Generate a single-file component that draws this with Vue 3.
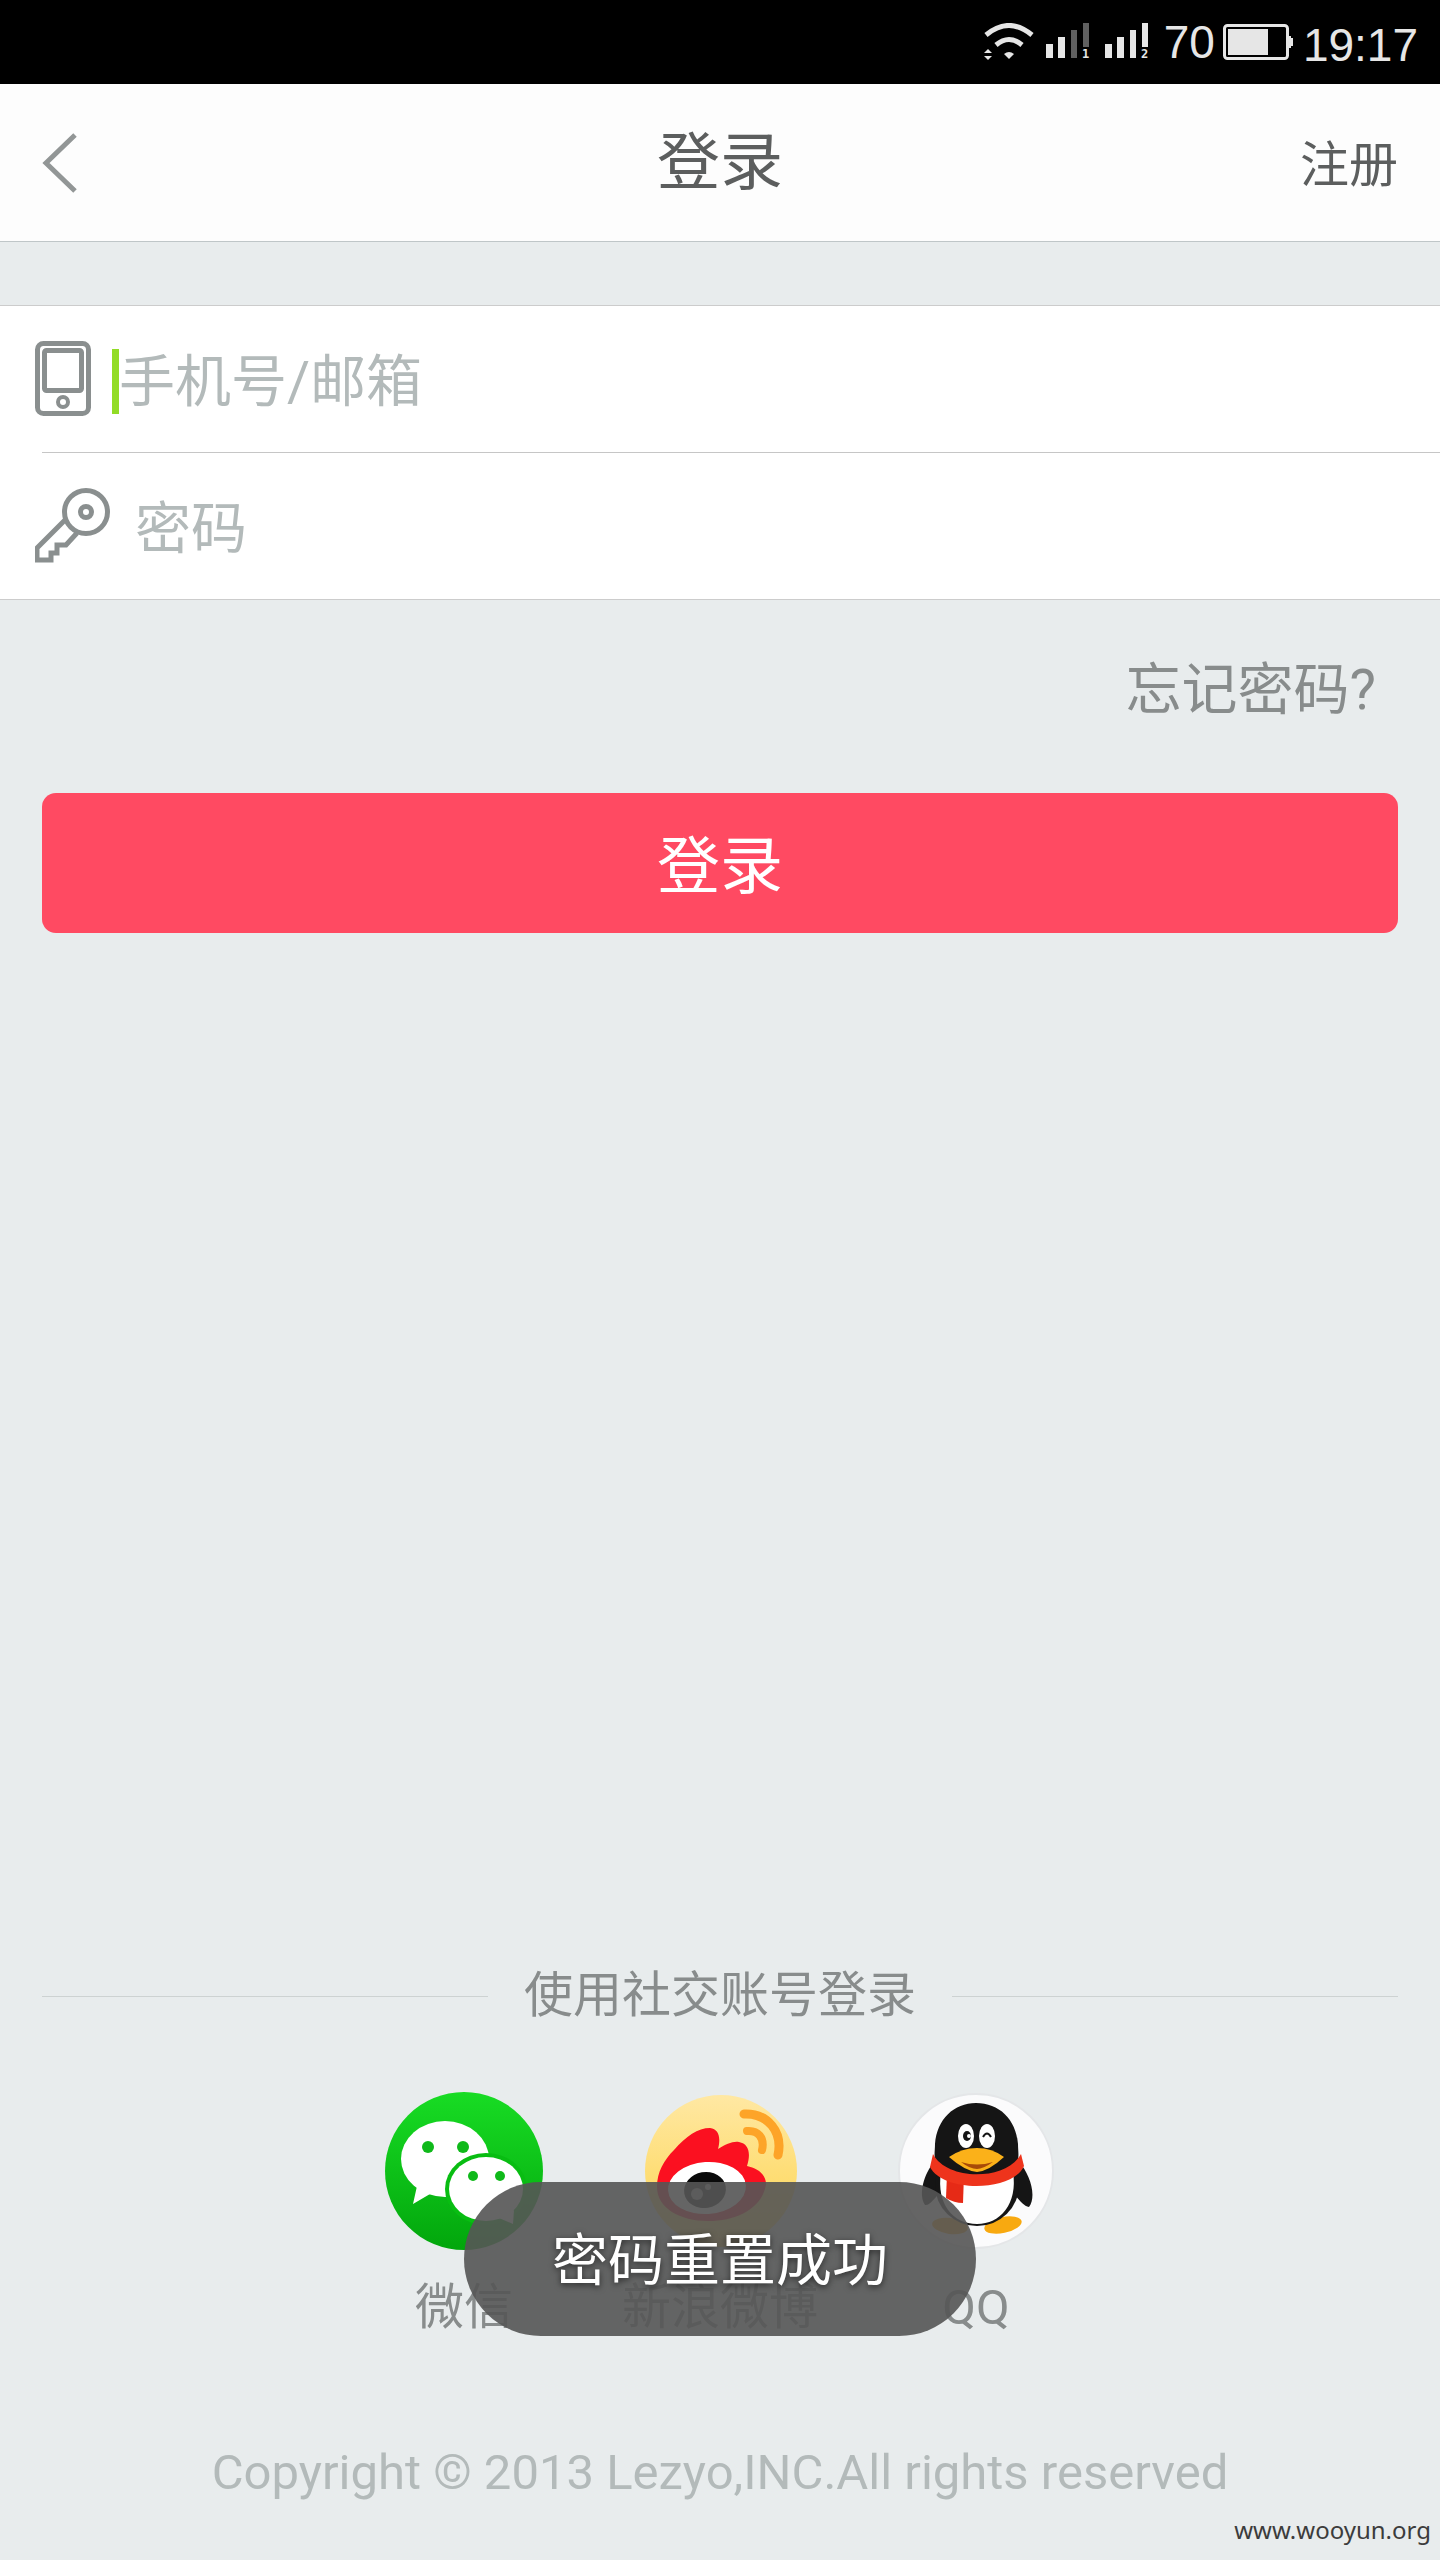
<template>
  <div class="page">
    <!-- 状态栏 -->
    <div class="status-bar">
      <svg class="wifi" width="50" height="38" viewBox="0 0 50 38">
        <path d="M2 12 Q25 -7 48 12" fill="none" stroke="#e6e6e6" stroke-width="5" />
        <path d="M12 22 Q25 11 38 22" fill="none" stroke="#e6e6e6" stroke-width="5" />
        <path d="M20 31 Q25 27 30 31 L25 36 Z" fill="#e6e6e6" />
        <path d="M0 30 L4 26 L8 30 Z M0 33 L8 33 L4 37 Z" fill="#e6e6e6" />
      </svg>
      <svg v-for="sim in sims" :key="sim.id" class="signal" width="45" height="38" viewBox="0 0 45 38">
        <rect x="0" y="21" width="7" height="14" fill="#e6e6e6" />
        <rect x="12" y="14" width="7" height="21" fill="#e6e6e6" />
        <rect x="25" y="7" width="6" height="28" :fill="sim.weak ? '#606060' : '#e6e6e6'" />
        <rect x="37" y="0" width="6" height="24" :fill="sim.weak ? '#606060' : '#e6e6e6'" />
        <text x="36" y="35" class="sim-no">{{ sim.id }}</text>
      </svg>
      <span class="battery-level">70</span>
      <svg class="battery" width="70" height="36" viewBox="0 0 70 36">
        <rect x="1.5" y="1.5" width="63" height="33" rx="3" fill="none" stroke="#e6e6e6" stroke-width="3" />
        <rect x="5" y="5" width="40" height="26" fill="#e6e6e6" />
        <path d="M65 12 h3 v2 h2 v8 h-2 v2 h-3 Z" fill="#e6e6e6" />
      </svg>
      <span class="time">19:17</span>
    </div>

    <!-- 标题栏 -->
    <header class="header">
      <button type="button" class="back" aria-label="返回">
        <svg width="36" height="62" viewBox="0 0 36 62">
          <path d="M33 3 L4 31 L33 59" fill="none" stroke="#929696" stroke-width="5" />
        </svg>
      </button>
      <h1>登录</h1>
      <a href="#register" class="register">注册</a>
    </header>

    <!-- 登录表单 -->
    <form @submit.prevent="login">
      <div class="fields">
        <div class="field">
          <label for="account" aria-label="手机号/邮箱">
            <svg width="56" height="75" viewBox="0 0 56 75" fill="none" stroke="#8a8f8f">
              <rect x="2.5" y="2.5" width="51" height="70" rx="6" stroke-width="5" />
              <rect x="9.5" y="9.5" width="37" height="40" rx="2" stroke-width="5" />
              <circle cx="28" cy="61" r="5" stroke-width="4" />
            </svg>
          </label>
          <span v-if="!form.account" class="caret"></span>
          <input id="account" v-model="form.account" type="text" placeholder="手机号/邮箱" />
        </div>
        <div class="divider"></div>
        <div class="field">
          <label for="password" aria-label="密码">
            <svg width="79" height="75" viewBox="0 0 79 75" fill="none" stroke="#8a8f8f">
              <circle cx="51" cy="24" r="21.5" stroke-width="5" />
              <circle cx="51" cy="24" r="5.5" stroke-width="5" />
              <path d="M30 32 L2 60 V72 H16 V65 H22 V57 H31 L42 45" stroke-width="5" />
            </svg>
          </label>
          <input id="password" v-model="form.password" type="password" placeholder="密码" />
        </div>
      </div>
      <div class="forgot">
        <a href="#forgot">忘记密码?</a>
      </div>
      <button type="submit" class="submit">登录</button>
    </form>

    <!-- 社交账号 -->
    <section class="social">
      <h2>使用社交账号登录</h2>
      <div class="social-list">
        <a href="#wechat" class="social-item">
          <svg width="160" height="160" viewBox="0 0 160 160">
            <defs>
              <linearGradient id="wechat-bg" x1="0" y1="0" x2="0" y2="1">
                <stop offset="0" stop-color="#18dc24" />
                <stop offset="1" stop-color="#02a60c" />
              </linearGradient>
            </defs>
            <circle cx="80" cy="79" r="79" fill="url(#wechat-bg)" />
            <ellipse cx="61" cy="67" rx="44" ry="38" fill="#fff" />
            <path d="M33 94 L29 112 L46 102 L56 98 Z" fill="#fff" />
            <circle cx="44" cy="55" r="6" fill="#0fb91a" />
            <circle cx="79" cy="55" r="6" fill="#0fb91a" />
            <ellipse cx="102" cy="97" rx="41" ry="36" fill="#08bd12" />
            <ellipse cx="102" cy="97" rx="37" ry="32" fill="#fff" />
            <path d="M115 126 L129 132 L130 118 Z" fill="#fff" />
            <circle cx="89" cy="84" r="5" fill="#0fb91a" />
            <circle cx="116" cy="84" r="5" fill="#0fb91a" />
          </svg>
          <span>微信</span>
        </a>
        <a href="#weibo" class="social-item">
          <svg width="160" height="160" viewBox="0 0 160 160">
            <defs>
              <linearGradient id="weibo-bg" x1="0" y1="0" x2="0" y2="1">
                <stop offset="0" stop-color="#ffe8a3" />
                <stop offset="1" stop-color="#fdd44c" />
              </linearGradient>
            </defs>
            <circle cx="81" cy="79" r="76" fill="url(#weibo-bg)" />
            <path
              d="M17 95 C17 80 24 68 34 58 C46 44 58 36 70 36 C79 37 81 46 78 57 C86 52 93 49 99 50 C109 52 111 61 107 74 C117 76 126 82 126 92 C123 115 98 129 68 129 C40 129 17 116 17 95 Z"
              fill="#fb1020"
            />
            <ellipse cx="67" cy="96" rx="39" ry="26" fill="#fff" transform="rotate(-4 67 96)" />
            <ellipse cx="65" cy="98" rx="21" ry="18" fill="#0a0a0a" transform="rotate(-10 65 98)" />
            <circle cx="57" cy="102" r="6" fill="#999" />
            <circle cx="68" cy="95" r="3" fill="#999" />
            <g fill="none" stroke="#fda428" stroke-linecap="round">
              <path d="M104 22 C128 21 143 40 138 63" stroke-width="9" />
              <path d="M107 39 C118 38 125 46 122 58" stroke-width="8" />
            </g>
          </svg>
          <span>新浪微博</span>
        </a>
        <a href="#qq" class="social-item">
          <svg width="160" height="160" viewBox="0 0 160 160">
            <circle cx="80" cy="79" r="77" fill="#fbfbfc" stroke="#e4e6e8" stroke-width="2" />
            <!-- 脚 -->
            <ellipse cx="54" cy="134" rx="18" ry="8" fill="#f8a910" transform="rotate(8 54 134)" />
            <ellipse cx="107" cy="133" rx="19" ry="8" fill="#f8a910" transform="rotate(-12 107 133)" />
            <!-- 翅膀和身体 -->
            <path d="M38 70 C28 82 22 102 29 113 C34 114 38 106 44 101 L50 76 Z" fill="#151515" />
            <path d="M123 70 C134 82 141 104 133 115 C127 114 123 107 117 101 L112 76 Z" fill="#151515" />
            <ellipse cx="81" cy="93" rx="42" ry="41" fill="#151515" />
            <path d="M39 68 C38 62 39 58 39 52 C41 27 58 11 80 11 C103 11 120 27 122 52 C122 58 123 62 122 68 Z" fill="#151515" />
            <path d="M45 80 H117 C122 112 104 132 81 132 C57 132 40 112 45 80 Z" fill="#fff" />
            <path d="M39 66 H122 L119 82 Q81 94 42 82 Z" fill="#151515" />
            <!-- 围巾 -->
            <path d="M51 82 H68 L67 111 Q58 111 50 106 Z" fill="#e62a16" />
            <path d="M37 62 C51 89 110 89 125 62 L128 74 C117 100 47 101 34 75 Z" fill="#ee341c" />
            <!-- 脸 -->
            <ellipse cx="70" cy="44" rx="8" ry="12" fill="#fff" />
            <ellipse cx="91" cy="44" rx="8" ry="12" fill="#fff" />
            <ellipse cx="71" cy="44" rx="4" ry="5" fill="#151515" />
            <circle cx="73" cy="44" r="2" fill="#fff" />
            <path d="M87 45 Q91 38 95 45" fill="none" stroke="#151515" stroke-width="2" />
            <path d="M53 65 Q66 56 81 56 Q96 56 108 65 Q93 79 81 80 Q69 79 53 65 Z" fill="#fbb119" />
            <path d="M65 70 Q81 75 97 70 Q87 77 81 77 Q74 77 65 70 Z" fill="#a84a08" />
          </svg>
          <span>QQ</span>
        </a>
      </div>
    </section>

    <!-- 页脚 -->
    <footer>
      <p class="copyright">Copyright © 2013 Lezyo,INC.All rights reserved</p>
      <p class="site">www.wooyun.org</p>
    </footer>

    <div class="toast" role="status">密码重置成功</div>
  </div>
</template>

<script setup>
import { ref } from 'vue'

const sims = [
  { id: 1, weak: true },
  { id: 2, weak: false },
]

const form = ref({
  account: '',
  password: '',
})

function login() {
  console.log(form.value.account)
}
</script>

<style>
body {
  margin: 0;
  background-color: #e8eced;
}
</style>

<style scoped>
.page {
  position: relative;
  display: flex;
  flex-direction: column;
  min-height: 100vh;
  background-color: #e8eced;
  font-family: Roboto, 'Noto Sans CJK SC', sans-serif;
  color: #888c8c;
}

a {
  color: inherit;
  text-decoration: none;
}

svg {
  display: block;
}

.status-bar {
  display: flex;
  align-items: center;
  justify-content: flex-end;
  height: 84px;
  padding-right: 22px;
  background-color: #000;
  color: #e6e6e6;
  font-family: 'Liberation Sans', sans-serif;
  font-size: 46px;
}

.wifi {
  margin-right: 12px;
}

.signal {
  margin-right: 14px;
}

.sim-no {
  font-family: 'DejaVu Sans Mono', monospace;
  font-size: 12px;
  font-weight: bold;
  fill: #e6e6e6;
}

.battery {
  margin: 0 10px 0 8px;
}

.time {
  padding-top: 6px;
}

.header {
  display: grid;
  grid-template-columns: 1fr auto 1fr;
  align-items: center;
  height: 157px;
  padding: 0 42px;
  background-color: #fdfdfd;
  border-bottom: 1px solid #bfc6c8;
  color: #5c5e5e;
}

.header h1 {
  margin: 0;
  padding-bottom: 12px;
  font-size: 63px;
  font-weight: normal;
}

.back {
  justify-self: start;
  padding: 0;
  border: none;
  background: none;
  cursor: pointer;
}

.register {
  justify-self: end;
  padding-bottom: 4px;
  font-size: 49px;
}

.fields {
  margin-top: 63px;
  background-color: #fff;
  border-top: 1px solid #ccc;
  border-bottom: 1px solid #ccc;
}

.field {
  display: flex;
  align-items: center;
  height: 146px;
  padding-left: 35px;
}

.field label {
  margin-right: 21px;
  padding-bottom: 2px;
}

.field input {
  flex: 1;
  min-width: 0;
  padding: 6px 0 0;
  border: none;
  outline: none;
  background: none;
  color: #5c5e5e;
  font-family: inherit;
  font-size: 56px;
}

.field input::placeholder {
  color: #b3baba;
}

.caret {
  width: 7px;
  height: 65px;
  margin-top: 4px;
  background-color: #92dc26;
}

.divider {
  height: 1px;
  margin-left: 42px;
  background-color: #c6c6c6;
}

.forgot {
  display: flex;
  justify-content: flex-end;
  padding: 48px 64px;
  font-size: 56px;
  line-height: 84px;
}

.submit {
  display: block;
  width: calc(100% - 84px);
  height: 140px;
  margin: 13px 42px 0;
  padding: 0 0 6px;
  border: none;
  border-radius: 14px;
  background-color: #ff4a62;
  color: #fff;
  font-family: inherit;
  font-size: 63px;
  cursor: pointer;
}

.social {
  margin-top: auto;
  padding: 0 42px;
  font-size: 49px;
  line-height: 60px;
}

.social h2 {
  display: flex;
  align-items: center;
  gap: 36px;
  margin: 0 0 66px;
  font-size: 49px;
  font-weight: normal;
}

.social h2::before,
.social h2::after {
  content: '';
  flex: 1;
  height: 1px;
  background-color: #cdd2d2;
}

.social-list {
  display: flex;
  justify-content: center;
}

.social-item {
  display: flex;
  flex-direction: column;
  align-items: center;
  gap: 26px;
  width: 256px;
}

footer {
  padding-top: 105px;
}

footer p {
  margin: 0;
}

.copyright {
  color: #b3baba;
  font-size: 49px;
  line-height: 60px;
  text-align: center;
}

.site {
  padding: 11px 9px 14px;
  color: #3c3c3c;
  font-family: 'Noto Sans', sans-serif;
  font-size: 24px;
  line-height: 32px;
  text-align: right;
}

.toast {
  position: absolute;
  bottom: 224px;
  left: 50%;
  transform: translateX(-50%);
  padding: 4px 88px 0;
  border-radius: 77px;
  background-color: rgba(86, 86, 86, 0.91);
  color: #fff;
  font-size: 56px;
  line-height: 150px;
  white-space: nowrap;
  text-shadow: 0 2px 6px rgba(0, 0, 0, 0.6);
}
</style>
